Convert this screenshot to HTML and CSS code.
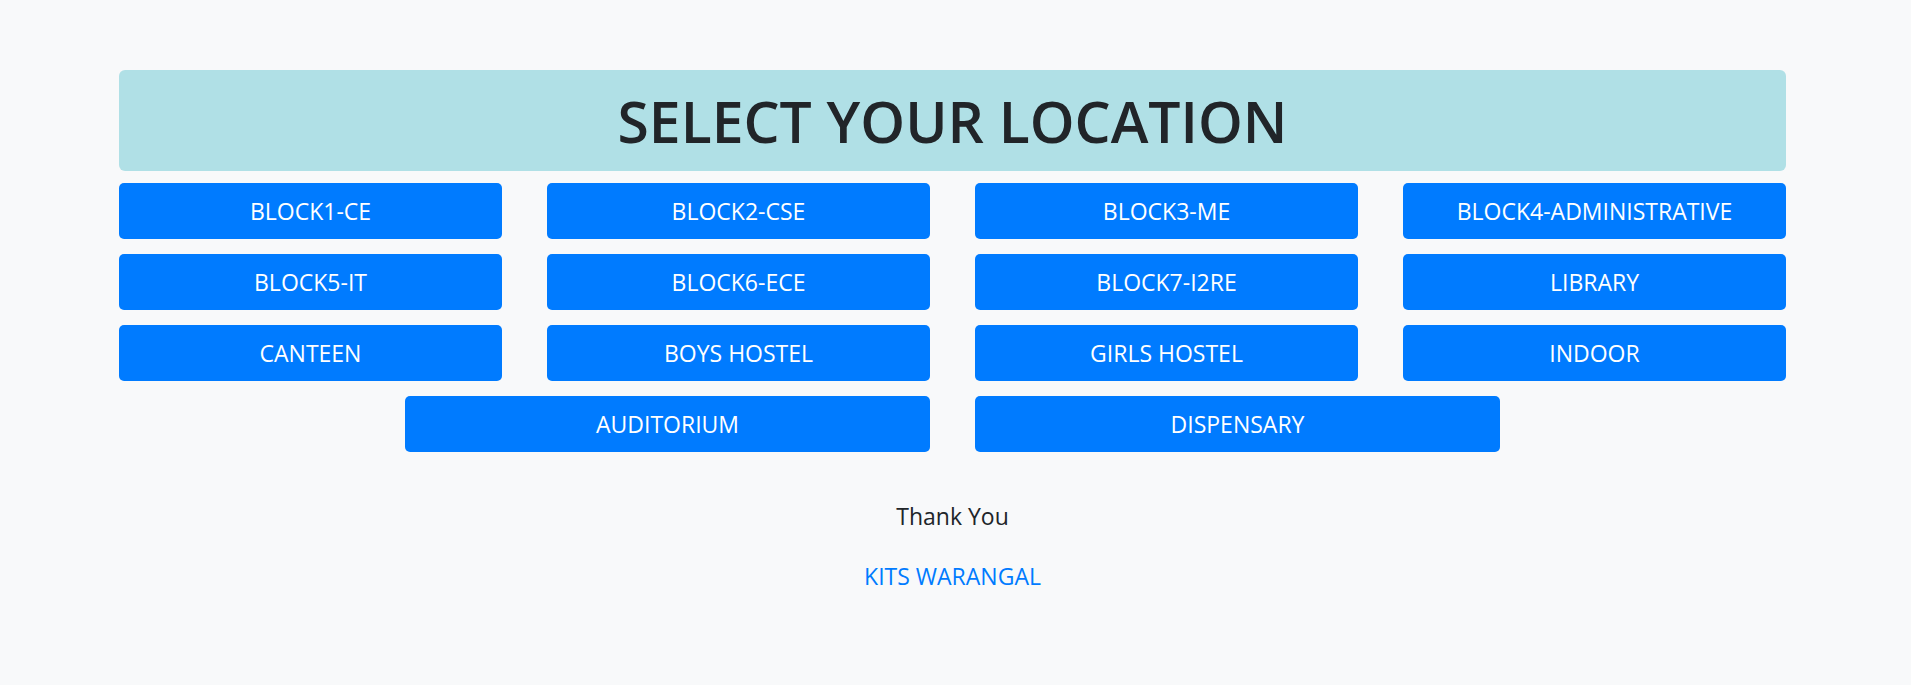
FILE: index.html
```html
<!DOCTYPE html>
<html lang="en">
<head>
<meta charset="utf-8">
<title>Select Your Location</title>
<link rel="stylesheet" href="styles.css">
</head>
<body>
<main class="page">
  <header class="banner">
    <h1 class="banner-title">SELECT YOUR LOCATION</h1>
  </header>
  <div class="grid">
    <a class="btn" href="#">BLOCK1-CE</a>
    <a class="btn" href="#">BLOCK2-CSE</a>
    <a class="btn" href="#">BLOCK3-ME</a>
    <a class="btn" href="#">BLOCK4-ADMINISTRATIVE</a>
    <a class="btn" href="#">BLOCK5-IT</a>
    <a class="btn" href="#">BLOCK6-ECE</a>
    <a class="btn" href="#">BLOCK7-I2RE</a>
    <a class="btn" href="#">LIBRARY</a>
    <a class="btn" href="#">CANTEEN</a>
    <a class="btn" href="#">BOYS HOSTEL</a>
    <a class="btn" href="#">GIRLS HOSTEL</a>
    <a class="btn" href="#">INDOOR</a>
  </div>
  <div class="last-row">
    <a class="btn btn-wide" href="#">AUDITORIUM</a>
    <a class="btn btn-wide" href="#">DISPENSARY</a>
  </div>
  <footer class="footer">
    <p class="thanks">Thank You</p>
    <a class="brand" href="#">KITS WARANGAL</a>
  </footer>
</main>
</body>
</html>
```
FILE: styles.css
```css
html, body {
  margin: 0;
  padding: 0;
}
body {
  background: #f8f9fa;
  color: #212529;
  font-family: "Open Sans", "Noto Sans", sans-serif;
}
.page {
  padding: 70px 125px 0 119px;
}
.banner {
  background: #b0e0e6;
  border-radius: 6px;
  height: 101px;
  display: flex;
  align-items: center;
  justify-content: center;
}
.banner-title {
  margin: 0;
  font-size: 57px;
  font-weight: 600;
  letter-spacing: 0;
  color: #212529;
}
.grid {
  margin-top: 12px;
  display: grid;
  grid-template-columns: repeat(4, 1fr);
  column-gap: 45px;
  row-gap: 15px;
}
.btn {
  display: flex;
  align-items: center;
  justify-content: center;
  height: 56px;
  background: #007bff;
  color: #fff;
  border-radius: 5px;
  font-size: 23px;
  text-decoration: none;
}
.last-row {
  margin-top: 15px;
  display: flex;
  justify-content: center;
  gap: 45px;
}
.btn-wide {
  width: 525px;
}
.footer {
  display: flex;
  flex-direction: column;
  align-items: center;
  margin-top: 47px;
}
.thanks {
  margin: 0;
  font-size: 23px;
  line-height: 34px;
}
.brand {
  margin-top: 26px;
  font-size: 23px;
  line-height: 34px;
  color: #007bff;
  text-decoration: none;
}
```
